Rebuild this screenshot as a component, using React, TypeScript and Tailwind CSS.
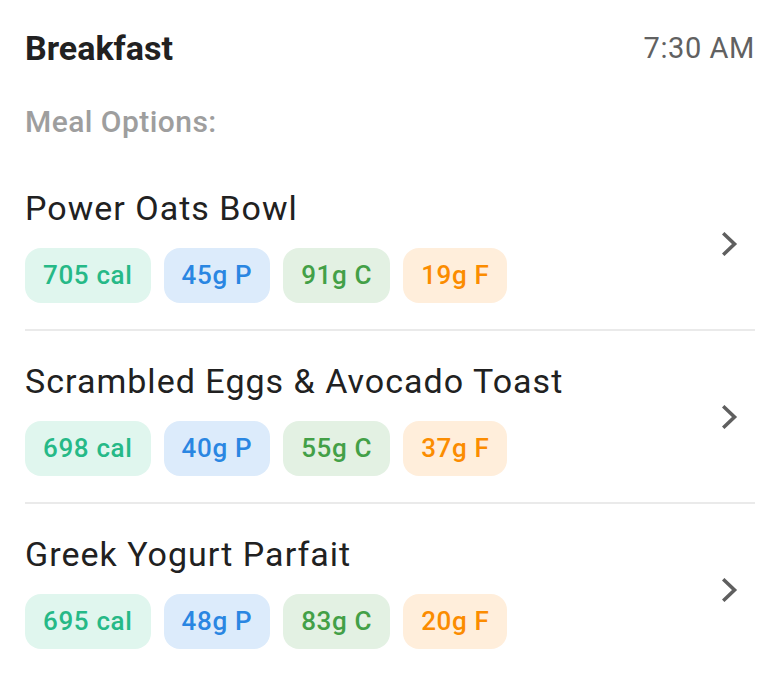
import React from "react";

type Meal = { name: string; cal: number; p: number; c: number; f: number };

const meals: Meal[] = [
  { name: "Power Oats Bowl", cal: 705, p: 45, c: 91, f: 19 },
  { name: "Scrambled Eggs & Avocado Toast", cal: 698, p: 40, c: 55, f: 37 },
  { name: "Greek Yogurt Parfait", cal: 695, p: 48, c: 83, f: 20 },
];

function Chip({ text, cls }: { text: string; cls: string }) {
  return (
    <div className={`h-[55px] px-[18px] rounded-[16px] flex items-center text-[26px] font-medium tracking-[0.025em] ${cls}`}>
      {text}
    </div>
  );
}

function Chevron() {
  return (
    <svg width="16" height="24" viewBox="0 0 16 24" fill="none">
      <path d="M2.5 2.5 L12.5 12 L2.5 21.5" stroke="#5f5f5f" strokeWidth="3.6" strokeLinecap="square" />
    </svg>
  );
}

export default function App() {
  return (
    <div className="w-[780px] h-[700px] bg-white px-[25px] pt-[24px]" style={{ fontFamily: "Roboto, 'Noto Sans', sans-serif" }}>
      <div className="flex items-center justify-between h-[48px]">
        <div className="text-[34px] font-bold text-[#212121] leading-[40px]">Breakfast</div>
        <div className="text-[29px] text-[#616161] leading-[40px] tracking-[0.02em]">7:30 AM</div>
      </div>
      <div className="mt-[32px] text-[30px] font-medium text-[#9e9e9e] leading-[36px] tracking-[0.015em]">Meal Options:</div>
      <div className="mt-[18px]">
        {meals.map((m, i) => (
          <div key={m.name} className={`flex items-center pt-[30px] pb-[26px] ${i < meals.length - 1 ? "border-b-2 border-[#eaeaea]" : ""}`}>
            <div className="flex-1">
              <div className="text-[34px] text-[#212121] leading-[40px] tracking-[0.03em]">{m.name}</div>
              <div className="flex gap-[13px] mt-[20px]">
                <Chip text={`${m.cal} cal`} cls="bg-[#e0f6ee] text-[#26b987]" />
                <Chip text={`${m.p}g P`} cls="bg-[#dcebfb] text-[#2a86e2]" />
                <Chip text={`${m.c}g C`} cls="bg-[#e3f1e3] text-[#43a047]" />
                <Chip text={`${m.f}g F`} cls="bg-[#ffeedb] text-[#fb8c00]" />
              </div>
            </div>
            <div className="pr-[17px] mt-[-4px]">
              <Chevron />
            </div>
          </div>
        ))}
      </div>
    </div>
  );
}
